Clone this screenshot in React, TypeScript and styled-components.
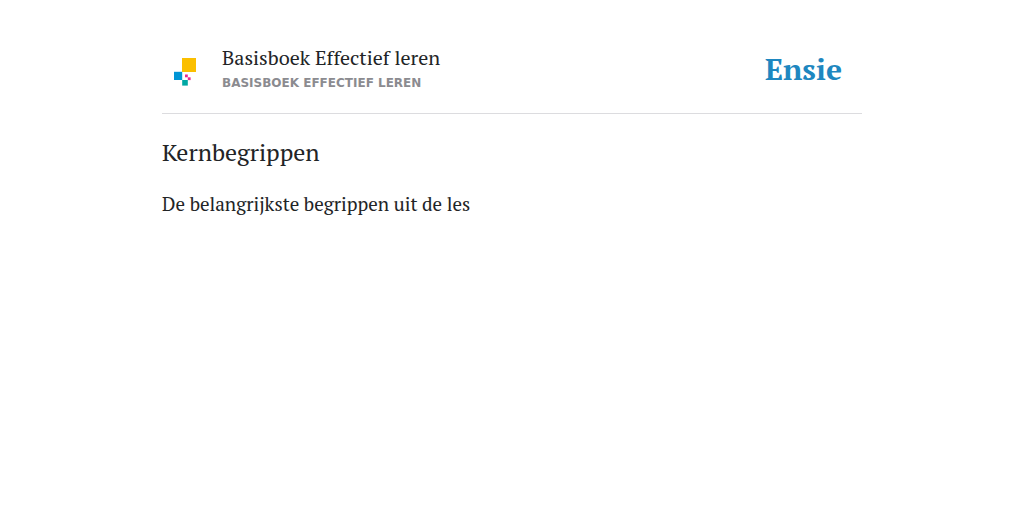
import React from "react";
import styled, { createGlobalStyle } from "styled-components";

const GlobalStyle = createGlobalStyle`
  * { box-sizing: border-box; }
  body {
    margin: 0;
    background: #fff;
    color: #222426;
    font-family: "PT Serif", "Liberation Serif", serif;
  }
`;

const Page = styled.div`
  max-width: 700px;
  margin: 0 auto;
  padding-top: 44px;
`;

const Header = styled.header`
  display: flex;
  justify-content: space-between;
  align-items: flex-start;
  padding: 0 20px 18px 12px;
  border-bottom: 1px solid #dcdcdf;
`;

const Book = styled.div`
  display: flex;
  align-items: flex-start;
  gap: 26px;
`;

const Mark = styled.svg`
  display: block;
  flex: none;
  margin-top: 14px;
`;

const BookTitle = styled.div`
  font-size: 20px;
  line-height: 28px;
`;

const BookSubtitle = styled.div`
  font-family: "DejaVu Sans", sans-serif;
  font-size: 12px;
  font-weight: 700;
  line-height: 23px;
  color: #8b8b90;
  text-transform: uppercase;
`;

const Brand = styled.a`
  color: #1e87c0;
  font-size: 30px;
  font-weight: 700;
  line-height: 51px;
  text-decoration: none;
`;

const Heading = styled.h1`
  margin: 24px 0;
  font-size: 24px;
  font-weight: 400;
  line-height: 29px;
`;

const Intro = styled.p`
  margin: 0;
  font-size: 19px;
  line-height: 26px;
`;

export default function App() {
  return (
    <>
      <GlobalStyle />
      <Page>
        <Header>
          <Book>
            <Mark width="22" height="28" viewBox="0 0 22 28" aria-hidden="true">
              <rect x="8" y="0" width="14" height="14" fill="#fbbf00" />
              <rect x="0" y="13.8" width="8.2" height="8.2" fill="#0095d5" />
              <rect x="8.2" y="22" width="5.6" height="5.6" fill="#00a8a4" />
              <rect x="11" y="16.5" width="2.8" height="2.8" fill="#ec268f" />
              <rect x="13.8" y="19.3" width="2.8" height="2.8" fill="#ec268f" />
            </Mark>
            <div>
              <BookTitle>Basisboek Effectief leren</BookTitle>
              <BookSubtitle>Basisboek Effectief leren</BookSubtitle>
            </div>
          </Book>
          <Brand href="#">Ensie</Brand>
        </Header>
        <main>
          <Heading>Kernbegrippen</Heading>
          <Intro>De belangrijkste begrippen uit de les</Intro>
        </main>
      </Page>
    </>
  );
}
